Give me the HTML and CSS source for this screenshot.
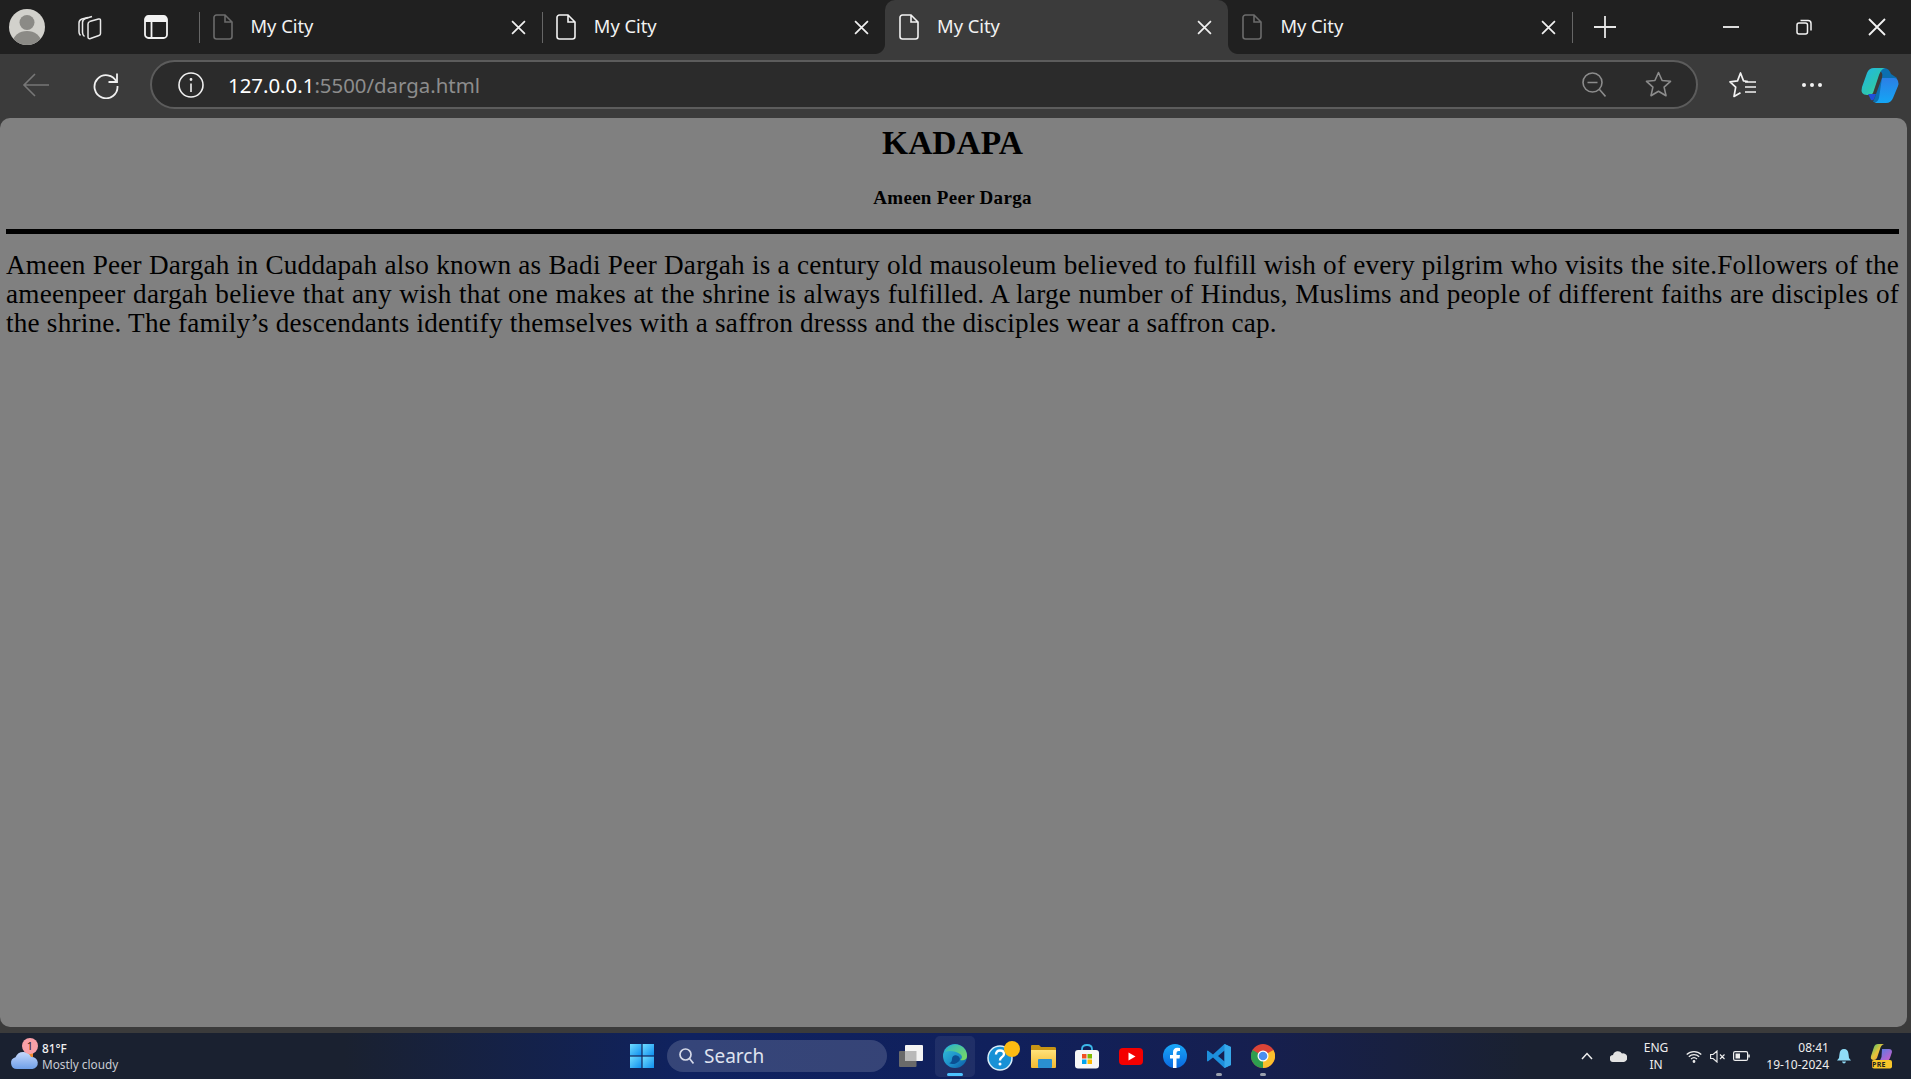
FILE: index.html
```html
<!DOCTYPE html>
<html lang="en">
<head>
<meta charset="utf-8">
<title>My City</title>
<link rel="stylesheet" href="styles.css">
</head>
<body>
<svg class="defs" width="0" height="0" aria-hidden="true">
  <defs>
    <symbol id="doc" viewBox="0 0 20 26"><path d="M3.5 1h8.5l7 7v14.5a2.5 2.5 0 0 1-2.5 2.5h-13A2.5 2.5 0 0 1 1 22.500v-19A2.500 2.500 0 0 1 3.500 1zM12 1v7h7" fill="none" stroke="currentColor" stroke-width="1.6"/></symbol>
    <symbol id="x" viewBox="0 0 14 14"><path d="M1 1l12 12M13 1L1 13" fill="none" stroke="currentColor" stroke-width="1.6"/></symbol>
    <linearGradient id="cp1" x1="0" y1="0" x2="1" y2="1"><stop offset="0" stop-color="#1fb6e8"/><stop offset=".55" stop-color="#2bc4b4"/><stop offset="1" stop-color="#57d98c"/></linearGradient>
    <linearGradient id="cp2" x1="0" y1="0" x2="0" y2="1"><stop offset="0" stop-color="#2b7fe6"/><stop offset="1" stop-color="#14a6f5"/></linearGradient>
    <linearGradient id="cpb1" x1="0" y1="0" x2="1" y2="1"><stop offset="0" stop-color="#3ec46d"/><stop offset=".5" stop-color="#e8c23a"/><stop offset="1" stop-color="#e8863a"/></linearGradient>
    <linearGradient id="cpb2" x1="0" y1="0" x2="1" y2="1"><stop offset="0" stop-color="#4a7fe6"/><stop offset="1" stop-color="#d85bc8"/></linearGradient>
    <linearGradient id="win" x1="0" y1="0" x2="1" y2="1"><stop offset="0" stop-color="#6fdcff"/><stop offset="1" stop-color="#0f8fef"/></linearGradient>
    <linearGradient id="edge" x1="0" y1="0" x2="1" y2="1"><stop offset="0" stop-color="#34c3d8"/><stop offset=".6" stop-color="#1b8bc9"/><stop offset="1" stop-color="#0c5aa0"/></linearGradient>
    <linearGradient id="edge2" x1="0" y1="0" x2="1" y2="1"><stop offset="0" stop-color="#2bb5c9"/><stop offset="1" stop-color="#7fdc5a"/></linearGradient>
    <linearGradient id="cloud" x1="0" y1="0" x2="0" y2="1"><stop offset="0" stop-color="#c5d8fb"/><stop offset="1" stop-color="#6f9fe8"/></linearGradient>
    <linearGradient id="folder" x1="0" y1="0" x2="0" y2="1"><stop offset="0" stop-color="#ffe27a"/><stop offset="1" stop-color="#f3b92f"/></linearGradient>
    <linearGradient id="fb" x1="0" y1="0" x2="0" y2="1"><stop offset="0" stop-color="#19a8f8"/><stop offset="1" stop-color="#0a68e0"/></linearGradient>
  </defs>
</svg>

<header class="tabstrip">
  <div class="slot s-avatar">
    <svg width="36" height="36" viewBox="0 0 36 36"><defs><clipPath id="av"><circle cx="18" cy="18" r="18"/></clipPath></defs><circle cx="18" cy="18" r="18" fill="#d2d1cc"/><g clip-path="url(#av)" fill="#8b8a86"><circle cx="18" cy="13.500" r="7.500"/><ellipse cx="18" cy="33" rx="14" ry="11"/></g></svg>
  </div>
  <div class="slot s-coll">
    <svg width="28" height="28" viewBox="0 0 28 28" fill="none" stroke="#e8e8e8" stroke-width="1.500"><path d="M13 4.500l-6 1.500q-3 1-3 4v9q0 2 1.500 3.500"/><path d="M17 3.500l-6.500 2q-3 1-3 4v10q0 2.500 2 4"/><path d="M14.500 8.500l9-2.500q2-.5 2 1.500v13q0 1.500-1.500 2l-8.500 3q-2.500.7-2.500-1.500v-13q0-2 2-2.500z"/></svg>
  </div>
  <div class="slot s-view">
    <svg width="24" height="24" viewBox="0 0 24 24"><rect x="1" y="1" width="22" height="22" rx="3.500" fill="none" stroke="#f2f2f2" stroke-width="1.800"/><path d="M1 4.500a3.500 3.500 0 0 1 3.500-3.500h15a3.500 3.500 0 0 1 3.500 3.500V7H1z" fill="#f2f2f2"/><path d="M7.500 7v16" stroke="#f2f2f2" stroke-width="1.800"/></svg>
  </div>
  <nav class="tabs">
    <div class="tab dim sep"><svg class="doc"><use href="#doc"/></svg><span class="tab-title">My City</span><svg class="close"><use href="#x"/></svg></div>
    <div class="tab sep"><svg class="doc"><use href="#doc"/></svg><span class="tab-title">My City</span><svg class="close"><use href="#x"/></svg></div>
    <div class="tab active"><svg class="doc"><use href="#doc"/></svg><span class="tab-title">My City</span><svg class="close"><use href="#x"/></svg></div>
    <div class="tab dim"><svg class="doc"><use href="#doc"/></svg><span class="tab-title">My City</span><svg class="close"><use href="#x"/></svg></div>
  </nav>
  <div class="newtab">
    <svg width="22" height="22" viewBox="0 0 22 22"><path d="M11 0v22M0 11h22" stroke="#e6e6e6" stroke-width="1.800"/></svg>
  </div>
  <div class="winctl">
    <div class="wbtn"><svg width="16" height="16" viewBox="0 0 16 16"><path d="M0 8h16" stroke="#f2f2f2" stroke-width="1.800"/></svg></div>
    <div class="wbtn"><svg width="16" height="16" viewBox="0 0 16 16" fill="none" stroke="#f2f2f2" stroke-width="1.500"><rect x="1" y="4" width="10.500" height="11" rx="2"/><path d="M4.500 1.500h7.500q3 0 3 3v7"/></svg></div>
    <div class="wbtn"><svg width="18" height="18" viewBox="0 0 18 18"><path d="M1 1l16 16M17 1L1 17" stroke="#f2f2f2" stroke-width="1.800"/></svg></div>
  </div>
</header>

<div class="toolbar">
  <div class="tool t-back"><svg width="28" height="26" viewBox="0 0 28 26" fill="none" stroke="#777" stroke-width="1.600"><path d="M27 13H2M13 2L2 13l11 11"/></svg></div>
  <div class="tool t-reload"><svg width="28" height="28" viewBox="0 0 28 28" fill="none" stroke="#f0f0f0" stroke-width="1.800"><path d="M24.500 11A11.500 11.500 0 1 0 25.500 15"/><path d="M25 2.500V11h-8.500"/></svg></div>
  <div class="address">
    <div class="info"><svg width="26" height="26" viewBox="0 0 26 26" fill="none" stroke="#f0f0f0" stroke-width="1.600"><circle cx="13" cy="13" r="12"/><path d="M13 11.500V20"/><circle cx="13" cy="7.500" r=".6" fill="#f0f0f0"/></svg></div>
    <div class="url"><span class="host">127.0.0.1</span>:5500/darga.html</div>
    <div class="addr-icon"><svg width="24" height="26" viewBox="0 0 24 26" fill="none" stroke="#8c8c8c" stroke-width="1.600"><circle cx="10.500" cy="10.500" r="9.500"/><path d="M5.500 10.500h10M17.500 17.500l6 7"/></svg></div>
    <div class="addr-icon"><svg width="27" height="27" viewBox="0 0 27 27" fill="none" stroke="#8c8c8c" stroke-width="1.600"><path d="M13.500 1.500l3.600 8 8.400.8-6.400 5.800 1.900 8.600-7.500-4.500-7.500 4.500 1.900-8.600-6.400-5.800 8.400-.8z" stroke-linejoin="round"/></svg></div>
  </div>
  <div class="tool t-favs"><svg width="28" height="28" viewBox="0 0 28 28" fill="none" stroke="#f2f2f2" stroke-width="1.700"><path d="M19 10.500l-4.500-.6L11.500 2 8.500 9.900 1 10.800l5.700 5.400L5 25.500l6.500-3.700" stroke-linejoin="round"/><path d="M16 11h11M16 16h11M16 21h11"/></svg></div>
  <div class="tool t-more"><svg width="22" height="6" viewBox="0 0 22 6" fill="#f2f2f2"><circle cx="3" cy="3" r="2"/><circle cx="11" cy="3" r="2"/><circle cx="19" cy="3" r="2"/></svg></div>
  <div class="tool t-copilot"><svg width="40" height="40" viewBox="0 0 40 40"><path d="M17 3h8q5 0 7 6l6 4-10 20q-2 4-6 4h-8l9-24q2-6-6-10z" fill="#0b6fb0"/><path d="M3 22 8 8q2-5 7-5h11q-4 1-6 7l-6 18q-1 2-4 2H8q-7 0-5-8z" fill="url(#cp1)"/><path d="M23 13h12q3 0 4 3t0 5l-5 12q-2 5-7 5H15q4-1 5-5l3-20z" fill="url(#cp2)"/><path d="M9 29h8l-2 5q-1 2-3 1z" fill="#1f4fd8"/></svg></div>
</div>

<main class="page">
  <h1 class="title">KADAPA</h1>
  <h3 class="subtitle">Ameen Peer Darga</h3>
  <hr class="rule">
  <p class="body-text">Ameen Peer Dargah in Cuddapah also known as Badi Peer Dargah is a century old mausoleum believed to fulfill wish of every pilgrim who visits the site.Followers of the ameenpeer dargah believe that any wish that one makes at the shrine is always fulfilled. A large number of Hindus, Muslims and people of different faiths are disciples of the shrine. The family’s descendants identify themselves with a saffron dresss and the disciples wear a saffron cap.</p>
</main>

<footer class="taskbar">
  <div class="weather">
    <div class="w-icon">
      <svg width="30" height="24" viewBox="0 0 30 24"><path d="M18 2h6v8h-6z" fill="#f08a2c"/><path d="M8 22a6 6 0 0 1-1.500-11.800A8.500 8.500 0 0 1 22 10a6 6 0 0 1 1.500 12z" fill="url(#cloud)"/></svg>
      <span class="badge">1</span>
    </div>
    <div class="w-text"><div class="w-temp">81°F</div><div class="w-desc">Mostly cloudy</div></div>
  </div>
  <div class="center-icons">
    <div class="tb s-win"><svg width="24" height="24" viewBox="0 0 24 24" fill="url(#win)"><rect width="11.400" height="11.400"/><rect x="12.600" width="11.400" height="11.400"/><rect y="12.600" width="11.400" height="11.400"/><rect x="12.600" y="12.600" width="11.400" height="11.400"/></svg></div>
    <div class="search"><svg width="15" height="16" viewBox="0 0 15 16" fill="none" stroke="#d5d9e8" stroke-width="1.700"><circle cx="6.500" cy="6.500" r="5.500"/><path d="M10.500 10.500l4 5"/></svg><span>Search</span></div>
    <div class="tb s-task"><svg width="24" height="22" viewBox="0 0 24 22"><rect x="0" y="6" width="17.500" height="16" rx="1" fill="#6a6a6a"/><rect x="6" y="0" width="18" height="16" rx="1" fill="#f4f4f4"/><rect x="6" y="6" width="11.500" height="10" fill="#b9b9b9"/></svg></div>
    <div class="tb s-app running">
      <svg width="24" height="24" viewBox="0 0 24 24"><circle cx="12" cy="12" r="12" fill="url(#edge)"/><path d="M2 8C5 1 13-1 18 2c4 2 6 6 6 10 0 4-4 5-7 4 2-1 3-4 0-6-4-3-11-4-15-2z" fill="url(#edge2)"/><path d="M9 15c0-3 3-5 6-3 3 2 2 5 0 6-2 2-6 3-9 1 2 0 3-2 3-4z" fill="#0b4f92"/></svg>
      <i class="bar wide"></i>
    </div>
    <div class="tb s-app">
      <svg class="help" width="34" height="30" viewBox="0 0 34 30"><circle cx="13" cy="17" r="12" fill="#1791d6" stroke="#d9eef8" stroke-width="1.500"/><path d="M9 13.500q0-4 4-4t4 3.500q0 2-2.500 3.500-1.500 1-1.500 3" fill="none" stroke="#fff" stroke-width="2.400"/><circle cx="13" cy="23" r="1.500" fill="#fff"/><circle cx="25" cy="8" r="8" fill="#fdbb12"/></svg>
    </div>
    <div class="tb s-app">
      <svg width="25" height="24" viewBox="0 0 25 24"><path d="M0 2q0-1 1-1h7l2 2h13q2 0 2 1v4H0z" fill="#c79414"/><path d="M0 6h25v17q0 1-1 1H1q-1 0-1-1z" fill="url(#folder)"/><rect x="7" y="15" width="14" height="9" rx="1" fill="#2a8fd0"/></svg>
    </div>
    <div class="tb s-app">
      <svg width="24" height="25" viewBox="0 0 24 25"><path d="M7 7V5q0-4 5-4t5 4v2" fill="none" stroke="#3cb8e8" stroke-width="1.800"/><rect y="6" width="24" height="18.500" rx="3" fill="#f7f7f7"/><rect x="7" y="10" width="4.500" height="4.500" fill="#f25022"/><rect x="12.500" y="10" width="4.500" height="4.500" fill="#7fba00"/><rect x="7" y="15.500" width="4.500" height="4.500" fill="#00a4ef"/><rect x="12.500" y="15.500" width="4.500" height="4.500" fill="#ffb900"/></svg>
    </div>
    <div class="tb s-app">
      <svg width="24" height="17" viewBox="0 0 24 17"><rect width="24" height="17" rx="4" fill="#f40000"/><path d="M9.500 4.500l7 4-7 4z" fill="#fff"/></svg>
    </div>
    <div class="tb s-app">
      <svg width="24" height="24" viewBox="0 0 24 24"><circle cx="12" cy="12" r="12" fill="url(#fb)"/><path d="M13.500 24v-9.500h3l.5-3.500h-3.500V9q0-2 2-2H17V4q-1-.3-2.500-.3-4.500 0-4.500 4.500V11H7v3.500h3V24z" fill="#fff"/></svg>
    </div>
    <div class="tb s-app dot">
      <svg width="24" height="24" viewBox="0 0 24 24"><path d="M17.500 0L24 3v18l-6.500 3L6 13.500.8 17.500 0 17V7l.8-.5L6 10.500zM17.500 6.500L11 12l6.500 5.500z" fill="#1d8fdc"/><path d="M17.500 0L24 3v18l-6.500 3z" fill="#36a8ea"/></svg>
      <i class="bar"></i>
    </div>
    <div class="tb s-app dot">
      <svg width="24" height="24" viewBox="0 0 24 24"><circle cx="12" cy="12" r="12" fill="#db4437"/><path d="M12 12L22.400 6A12 12 0 0 1 12 24z" fill="#fbc02d"/><path d="M12 12L12 24A12 12 0 0 1 1.600 6z" fill="#2e9e4f"/><circle cx="12" cy="12" r="5.500" fill="#fff"/><circle cx="12" cy="12" r="4.300" fill="#4a8ef0"/></svg>
      <i class="bar"></i>
    </div>
  </div>
  <div class="tray">
    <div class="tr t-chev"><svg width="12" height="8" viewBox="0 0 12 8" fill="none" stroke="#eee" stroke-width="1.500"><path d="M1 7l5-5.500L11 7"/></svg></div>
    <div class="tr t-cloud"><svg width="17" height="11" viewBox="0 0 17 11" fill="#e3e3e3"><path d="M3.500 11A3.500 3.500 0 0 1 3 4a5 5 0 0 1 9-1.500A4.300 4.300 0 0 1 14 11z"/></svg></div>
    <div class="lang"><div>ENG</div><div>IN</div></div>
    <div class="tr t-wifi"><svg width="16" height="13" viewBox="0 0 16 13" fill="none" stroke="#eee" stroke-width="1.200"><path d="M.7 4.500a10.500 10.500 0 0 1 14.600 0M2.800 6.800a7.500 7.500 0 0 1 10.400 0M5 9a4.500 4.500 0 0 1 6 0"/><circle cx="8" cy="11.500" r=".8" fill="#eee"/></svg></div>
    <div class="tr t-vol"><svg width="16" height="13" viewBox="0 0 16 13" fill="none" stroke="#eee" stroke-width="1.100"><path d="M.6 4.500h2.500L7 1v11L3.100 8.500H.6zM10 4.500l4.500 4.500M14.500 4.500L10 9"/></svg></div>
    <div class="tr t-bat"><svg width="17" height="10" viewBox="0 0 17 10" fill="none" stroke="#eee" stroke-width="1.200"><rect x=".6" y=".6" width="14" height="8.800" rx="1.500"/><rect x="2.500" y="2.500" width="4.500" height="5" fill="#eee" stroke="none"/><path d="M16 3.500v3" stroke-width="1.500"/></svg></div>
    <div class="clock"><div>08:41</div><div>19-10-2024</div></div>
    <div class="tr t-bell"><svg width="14" height="15" viewBox="0 0 14 15" fill="#8fdcf7"><path d="M7 0q4 0 4.500 5l.5 4 2 2.500H0L2 9l.5-4Q3 0 7 0zM5 12.500h4q-.5 2-2 2t-2-2z"/></svg></div>
    <div class="tr t-pre"><svg width="24" height="26" viewBox="0 0 24 26"><path d="M2 13L5 4q1-3 4-3h6q-3 1-4 5L8 15q-1 2-3 2-4 0-3-4z" fill="url(#cpb1)"/><path d="M13 6h7q3 0 3 3l-2 6q-1 3-4 3H9q3-1 3.500-4z" fill="url(#cpb2)"/><rect x="3" y="17" width="20" height="8.500" rx="2" fill="#f7c52a"/></svg><span class="pre">PRE</span></div>
  </div>
</footer>
</body>
</html>
```
FILE: styles.css
```css
* { box-sizing: border-box; }
html, body { height: 100%; }
body {
  margin: 0;
  height: 1079px;
  overflow: hidden;
  display: flex;
  flex-direction: column;
  background: #3b3b3b;
  font-family: "Noto Sans", sans-serif;
  color: #fff;
}
.defs { position: absolute; }

/* tab strip */
.tabstrip { height: 54px; flex: none; display: flex; align-items: center; background: #202020; }
.slot { display: flex; align-items: center; justify-content: center; height: 54px; flex: none; }
.s-avatar { width: 54px; }
.s-coll { width: 70px; }
.s-view { width: 64px; }
.tabs { display: flex; height: 54px; margin-left: 10.500px; flex: none; }
.tab {
  position: relative;
  width: 343.300px;
  height: 54px;
  display: flex;
  align-items: center;
  padding-left: 14px;
  flex: none;
}
.tab.sep::before, .newtab::before {
  content: "";
  position: absolute;
  left: 0; top: 12px;
  width: 1px; height: 31px;
  background: #666;
}
.doc { width: 20px; height: 26px; color: #f2f2f2; flex: none; }
.dim .doc { color: #6b6b6b; }
.tab-title { margin-left: 18px; padding-bottom: 2px; font-size: 18.300px; color: #f2f2f2; line-height: 22px; flex: 1; }
.close { width: 15px; height: 15px; color: #f0f0f0; margin-right: 16px; flex: none; }
.tab.active { background: #3b3b3b; border-radius: 10px 10px 0 0; }
.tab.active::before, .tab.active::after {
  content: "";
  position: absolute;
  bottom: 0;
  width: 10px; height: 10px;
}
.tab.active::before { left: -10px; background: radial-gradient(circle at 0 0, #202020 9.500px, #3b3b3b 10.500px); }
.tab.active::after { right: -10px; background: radial-gradient(circle at 100% 0, #202020 9.500px, #3b3b3b 10.500px); }
.newtab { position: relative; width: 66px; height: 54px; display: flex; align-items: center; justify-content: center; flex: none; }
.winctl { display: flex; margin-left: auto; margin-right: -2.500px; height: 54px; }
.wbtn { width: 73px; display: flex; align-items: center; justify-content: center; }

/* toolbar */
.toolbar { height: 64px; flex: none; display: flex; align-items: center; padding-bottom: 3px; background: #3b3b3b; }
.tool { display: flex; align-items: center; justify-content: center; flex: none; }
.t-back { width: 72px; }
.t-reload { width: 68px; }
.address {
  width: 1548px;
  height: 49px;
  margin-left: 10px;
  flex: none;
  display: flex;
  align-items: center;
  background: #2b2b2b;
  border: 2px solid #5c5c5c;
  border-radius: 25px;
}
.info { width: 76px; padding-left: 26px; display: flex; flex: none; }
.url { flex: 1; font-size: 20.400px; color: #8d8d8d; line-height: 28px; }
.host { color: #fff; }
.addr-icon { width: 64px; display: flex; justify-content: center; flex: none; }
.addr-icon:last-child { width: 70px; padding-right: 6px; }
.t-favs { width: 90px; }
.t-more { width: 48px; }
.t-copilot { width: 86px; }

/* page */
.page {
  height: 909px;
  flex: none;
  background: #808080;
  border-radius: 10px;
  margin-right: 4px;
  padding: 0 8px 0 6px;
  color: #000;
  font-family: "Liberation Serif", serif;
}
.title { margin: 0; padding-top: 6px; text-align: center; font-size: 33.500px; line-height: 38px; font-weight: bold; }
.subtitle { margin: 25px 0 0; text-align: center; font-size: 19px; line-height: 22px; font-weight: bold; letter-spacing: .3px; }
.rule { margin: 20px 0 0; border: 0; height: 5px; background: #000; }
.body-text { margin: 17px 0 0; font-size: 27.200px; line-height: 29px; letter-spacing: .21px; text-align: justify; }

/* taskbar */
.taskbar {
  height: 46px;
  margin-top: 6px;
  flex: none;
  display: flex;
  align-items: center;
  position: relative;
  background: linear-gradient(90deg, #1a2130 0, #1a2130 18%, #0f2260 36%, #10205c 52%, #161f4f 66%, #1a2130 80%, #1a2130 100%);
}
.weather { width: 627px; flex: none; display: flex; align-items: center; padding-left: 9px; }
.w-icon { position: relative; width: 30px; height: 30px; display: flex; align-items: flex-end; }
.badge {
  position: absolute;
  top: -3px; left: 13px;
  width: 16px; height: 16px;
  border-radius: 50%;
  background: #f9a0a8;
  color: #2a1a1a;
  font-size: 11px;
  line-height: 16px;
  text-align: center;
}
.w-text { margin-left: 3px; font-size: 11.800px; line-height: 16px; }
.w-temp { color: #f2f2f2; font-weight: 500; }
.w-desc { color: #c9ccd3; }
.center-icons { display: flex; align-items: center; flex: none; }
.tb { display: flex; align-items: center; justify-content: center; flex: none; position: relative; height: 46px; }
.s-win { width: 30px; }
.search {
  width: 220px;
  height: 32px;
  margin-left: 10px;
  flex: none;
  display: flex;
  align-items: center;
  gap: 10px;
  padding-left: 12px;
  background: rgba(255,255,255,.16);
  border-radius: 16px;
  font-size: 19px;
  color: #dfe2ee;
}
.s-task { width: 48px; margin-right: -2px; }
.s-app { width: 44px; }
.help { margin-left: 10px; flex: none; }
.running::before {
  content: "";
  position: absolute;
  left: 2px; right: 2px; top: 3px; bottom: 2px;
  background: rgba(255,255,255,.07);
  border-radius: 5px;
}
.running svg { position: relative; }
.bar { position: absolute; bottom: 3px; left: 50%; width: 6px; height: 3px; margin-left: -3px; background: #9aa0ae; border-radius: 2px; }
.bar.wide { width: 16px; margin-left: -8px; background: #4cc2ff; }
.tray { margin-left: auto; display: flex; align-items: center; height: 46px; padding-right: 8px; font-size: 12px; color: #eee; flex: none; }
.tr { display: flex; align-items: center; justify-content: center; flex: none; }
.t-chev { width: 24px; }
.t-cloud { width: 38px; }
.lang { width: 38px; text-align: center; line-height: 17px; flex: none; font-size: 12px; }
.t-wifi { width: 28px; margin-left: 5px; }
.t-vol { width: 20px; }
.t-bat { width: 26px; }
.clock { width: 75px; text-align: right; font-size: 12px; line-height: 17px; flex: none; }
.t-bell { width: 30px; }
.t-pre { width: 44px; position: relative; }
.pre { position: absolute; left: 13px; top: 17px; font-size: 7px; font-weight: 700; color: #222; line-height: 9px; letter-spacing: .3px; }
```
